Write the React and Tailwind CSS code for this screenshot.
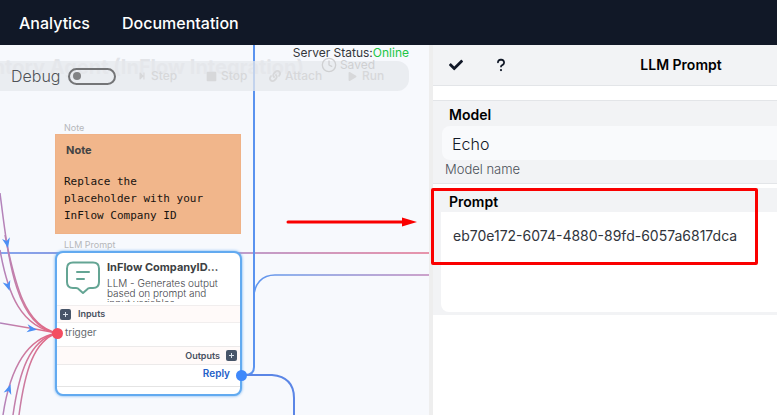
import React from "react";
import { FaCheck, FaStepForward, FaStop, FaLink, FaPlay } from "react-icons/fa";
import { FaQuestion } from "react-icons/fa6";
import { Clock } from "lucide-react";

function FlowArrow({ x, y, angle }) {
  return (
    <path
      d="M5 0 L-5 -4 L-2 0 L-5 4 Z"
      fill="#4b8ff5"
      transform={`translate(${x} ${y}) rotate(${angle})`}
    />
  );
}

function Edges() {
  return (
    <svg className="absolute left-0 top-0 h-[370px] w-[429px]" viewBox="0 45 429 370" fill="none" aria-hidden="true">
      <defs>
        <linearGradient id="across" gradientUnits="userSpaceOnUse" x1="0" y1="0" x2="429" y2="0">
          <stop offset="0" stopColor="#85a5ee" />
          <stop offset="0.15" stopColor="#8a9ce2" />
          <stop offset="0.58" stopColor="#c19cc9" />
          <stop offset="1" stopColor="#e794ab" />
        </linearGradient>
        <linearGradient id="branch" gradientUnits="userSpaceOnUse" x1="254" y1="0" x2="429" y2="0">
          <stop offset="0" stopColor="#5f96ef" />
          <stop offset="0.2" stopColor="#7299e6" />
          <stop offset="1" stopColor="#bf86bb" />
        </linearGradient>
        <linearGradient id="incoming" gradientUnits="userSpaceOnUse" x1="0" y1="0" x2="57" y2="0">
          <stop offset="0" stopColor="#b184bd" />
          <stop offset="0.45" stopColor="#cf7a9d" />
          <stop offset="1" stopColor="#e8607c" />
        </linearGradient>
      </defs>
      <path d="M0 253H429" stroke="url(#across)" strokeWidth="2" />
      <path d="M254 300V297C254 284 262 275 275 275H429" stroke="url(#branch)" strokeWidth="1.5" />
      <path d="M254 45V367Q254 375 245 375" stroke="#5b93ef" strokeWidth="2" />
      <path d="M241 375H272Q294 377 294 398V415" stroke="#5b86e6" strokeWidth="2" />
      <g stroke="url(#incoming)" strokeWidth="1.5">
        <path d="M0 193C8 256 15 327 57 333" />
        <path d="M5 235C15 285 25 326 57 333" />
        <path d="M0 250C8 295 21 327 57 333" />
        <path d="M0 323Q30 328 57 333" />
        <path d="M3 415C9 375 24 339 57 333" />
        <path d="M13 415C19 373 29 340 57 333" />
        <path d="M19 415C25 370 34 341 57 333" />
      </g>
      <FlowArrow x={7} y={243} angle={78} />
      <FlowArrow x={8} y={286} angle={72} />
      <FlowArrow x={32} y={329} angle={8} />
      <FlowArrow x={9} y={389} angle={-72} />
    </svg>
  );
}

function PortButton({ label }) {
  return (
    <button
      aria-label={label}
      className="flex size-[11px] items-center justify-center rounded-xs bg-[#475569] text-white"
    >
      <svg viewBox="0 0 5 5" className="size-[5px]" stroke="#dbe3ec" aria-hidden="true">
        <path d="M2.5 0V5M0 2.5H5" />
      </svg>
    </button>
  );
}

function NoteNode() {
  return (
    <div className="absolute left-[55px] top-[76px] w-[186px]">
      <div className="px-[9px] text-[9px] leading-[13px] text-[#b5b7ba]">Note</div>
      <div className="h-[100px] border border-[#efb287] bg-[#f1b68b] px-2">
        <h2 className="px-[2px] pt-[7px] text-[11px] font-bold leading-4 text-[#444]">Note</h2>
        <p className="pt-[15px] font-['DejaVu_Sans_Mono',monospace] text-[11px] leading-[17px] text-[#171310]">
          Replace the
          <br />
          placeholder with your
          <br />
          InFlow Company ID
        </p>
      </div>
    </div>
  );
}

function PromptNode() {
  return (
    <div className="absolute left-[55px] top-[193px] w-[187px]">
      <div className="px-[9px] text-[9px] leading-[13px] text-[#b5b7ba]">LLM Prompt</div>
      <div className="h-[145px] overflow-hidden rounded-lg border-2 border-[#62aaf0] bg-white shadow-[0_0_3px_#62aaf0]">
        <div className="flex h-[52px] gap-[6px] pl-2">
          <svg viewBox="0 0 36 34" className="mt-2 h-[34px] w-9 flex-none" fill="none" stroke="#64a594" strokeWidth="2" strokeLinecap="round" strokeLinejoin="round" aria-hidden="true">
            <path d="M8 1.500H28Q34 1.500 34 7.500V21Q34 27 28 27H25Q23 27 22 28.500L18 32L14 28.500Q13 27 11 27H8Q2 27 2 21V7.500Q2 1.500 8 1.500Z" />
            <path d="M12 11H24M12 18H19" />
          </svg>
          <div className="h-[49px] overflow-hidden pt-[6px]">
            <h2 className="whitespace-nowrap text-[11px] font-bold leading-4 text-[#3d3f43]">InFlow CompanyID…</h2>
            <p className="pt-[3px] text-[10px] font-light leading-[10px] text-[#3f4348]">
              LLM - Generates output
              <br />
              based on prompt and
              <br />
              input variables
            </p>
          </div>
        </div>
        <div className="flex h-[18px] items-center gap-[7px] border-y border-[#f1eeee] bg-[#fffaf9] pl-[3px] text-[9px] font-semibold text-[#475060]">
          <PortButton label="Add input" />
          Inputs
        </div>
        <div className="h-[23px] pl-2 text-[10px] leading-[19px] text-[#666a6e]">trigger</div>
        <div className="flex h-[19px] items-center justify-end gap-[6px] border-y border-[#eceaea] bg-[#fffaf9] pr-[3px] text-[9px] font-semibold text-[#475060]">
          Outputs
          <PortButton label="Add output" />
        </div>
        <div className="h-[22px] border-b border-[#e4e4e4] pr-[10px] text-right text-[10px] font-semibold leading-[17px] text-[#2360c8]">
          Reply
        </div>
      </div>
      <span className="absolute -left-[3px] top-[90px] size-[11px] rounded-full bg-[#f44d60]" />
      <span className="absolute -right-[5px] top-[132px] size-[11px] rounded-full bg-[#3f88fa]" />
    </div>
  );
}

function RunBar() {
  return (
    <div className="absolute left-0 right-5 top-4 flex h-[30px] items-center rounded-r-xl bg-[#e6e8ec]/75 pl-[11px] text-[12px] font-medium text-[#d7d8da]">
      <label className="flex w-[127px] items-center gap-[8px] text-[16px] font-light text-[#505357]">
        Debug
        <span className="relative flex">
          <input type="checkbox" className="h-[17px] w-12 appearance-none rounded-full border-2 border-[#747577]" />
          <span className="absolute left-[5px] top-[4px] size-[8px] rounded-full bg-[#818284]" />
        </span>
      </label>
      <button className="flex w-[68px] items-center gap-[5px]"><FaStepForward className="size-2" />Step</button>
      <button className="flex w-[63px] items-center gap-[4px]"><FaStop className="size-[11px]" />Stop</button>
      <button className="flex w-[79px] items-center gap-[4px]"><FaLink className="size-3" />Attach</button>
      <button className="flex items-center gap-[5px]"><FaPlay className="size-[9px]" />Run</button>
    </div>
  );
}

function FlowCanvas() {
  return (
    <section className="relative min-w-0 flex-[429_1_0%] overflow-hidden bg-[#f7f9fd]">
      <h1 className="absolute left-0 top-[8px] flex w-[304px] justify-end whitespace-nowrap text-[20px] font-bold leading-7 text-[#e2e4e8]">
        Inventory Agent (InFlow Integration)
      </h1>
      <Edges />
      <RunBar />
      <div className="absolute right-[54px] top-3 flex items-center gap-[3px] text-[12px] leading-4 text-[#cfd0d2]">
        <Clock className="size-4" strokeWidth={2} />
        Saved
      </div>
      <div className="absolute right-5 top-0 text-[12px] leading-4 text-[#34373b]">
        Server Status:<span className="text-[#22c545]">Online</span>
      </div>
      <NoteNode />
      <PromptNode />
      <svg className="absolute left-[286px] top-[171px] h-3 w-[132px]" viewBox="0 0 132 12" aria-hidden="true">
        <path d="M2 6H117" stroke="#fa0000" strokeWidth="3" strokeLinecap="round" />
        <path d="M116 1.500L131 6L116 10.500Z" fill="#fa0000" />
      </svg>
    </section>
  );
}

function PropertiesPanel() {
  return (
    <aside className="min-w-0 flex-[344_1_0%] bg-white text-black">
      <div className="flex h-[41px] items-center border-b border-[#e3e5e8] bg-[#f2f3f5]">
        <div className="flex w-[152px] gap-[31px] pl-4 text-[#111827]">
          <button aria-label="Apply"><FaCheck className="size-[14px]" /></button>
          <button aria-label="Help"><FaQuestion className="size-[14px]" /></button>
        </div>
        <h2 className="flex-1 text-center text-[14px] font-semibold leading-5">LLM Prompt</h2>
      </div>
      <div className="mt-[14px] border-y border-[#e3e5e8] bg-[#f2f3f5] pt-1">
        <label htmlFor="model" className="block px-4 pb-px text-[14px] font-semibold leading-5">Model</label>
        <div className="pl-[9px]">
          <input
            id="model"
            defaultValue="Echo"
            className="block h-[34px] w-full rounded-l-lg bg-[#f9fafc] px-[10px] pt-[2px] text-[16px] font-light text-[#111827]"
          />
        </div>
        <p className="px-3 pb-[5px] text-[13px] font-light leading-[18px] text-[#4b5058]">Model name</p>
      </div>
      <div className="relative mt-1 bg-[#f2f3f5] pb-[3px]">
        <label htmlFor="prompt" className="block px-4 pt-1 text-[14px] font-semibold leading-5">Prompt</label>
        <div className="pl-2">
          <textarea
            id="prompt"
            defaultValue="eb70e172-6074-4880-89fd-6057a6817dca"
            className="block h-[100px] w-full resize-none overflow-hidden rounded-bl-lg bg-white px-3 pt-[14px] text-[14px] font-normal leading-5 text-[#30343b]"
          />
        </div>
        <div className="pointer-events-none absolute -left-[2px] top-0 h-[77px] w-[327px] rounded-xs border-3 border-[#fa0000]" />
      </div>
    </aside>
  );
}

export default function App() {
  return (
    <div className="flex h-screen flex-col overflow-hidden bg-white font-['Inter',sans-serif]">
      <header className="flex h-[45px] flex-none items-center bg-[#111827] px-[19px]">
        <nav className="flex gap-8 text-[16px] font-medium leading-6 text-white">
          <a href="#analytics">Analytics</a>
          <a href="#documentation">Documentation</a>
        </nav>
      </header>
      <main className="flex min-h-0 flex-1">
        <FlowCanvas />
        <div className="w-1 flex-none bg-[#eeeeee]" />
        <PropertiesPanel />
      </main>
    </div>
  );
}
